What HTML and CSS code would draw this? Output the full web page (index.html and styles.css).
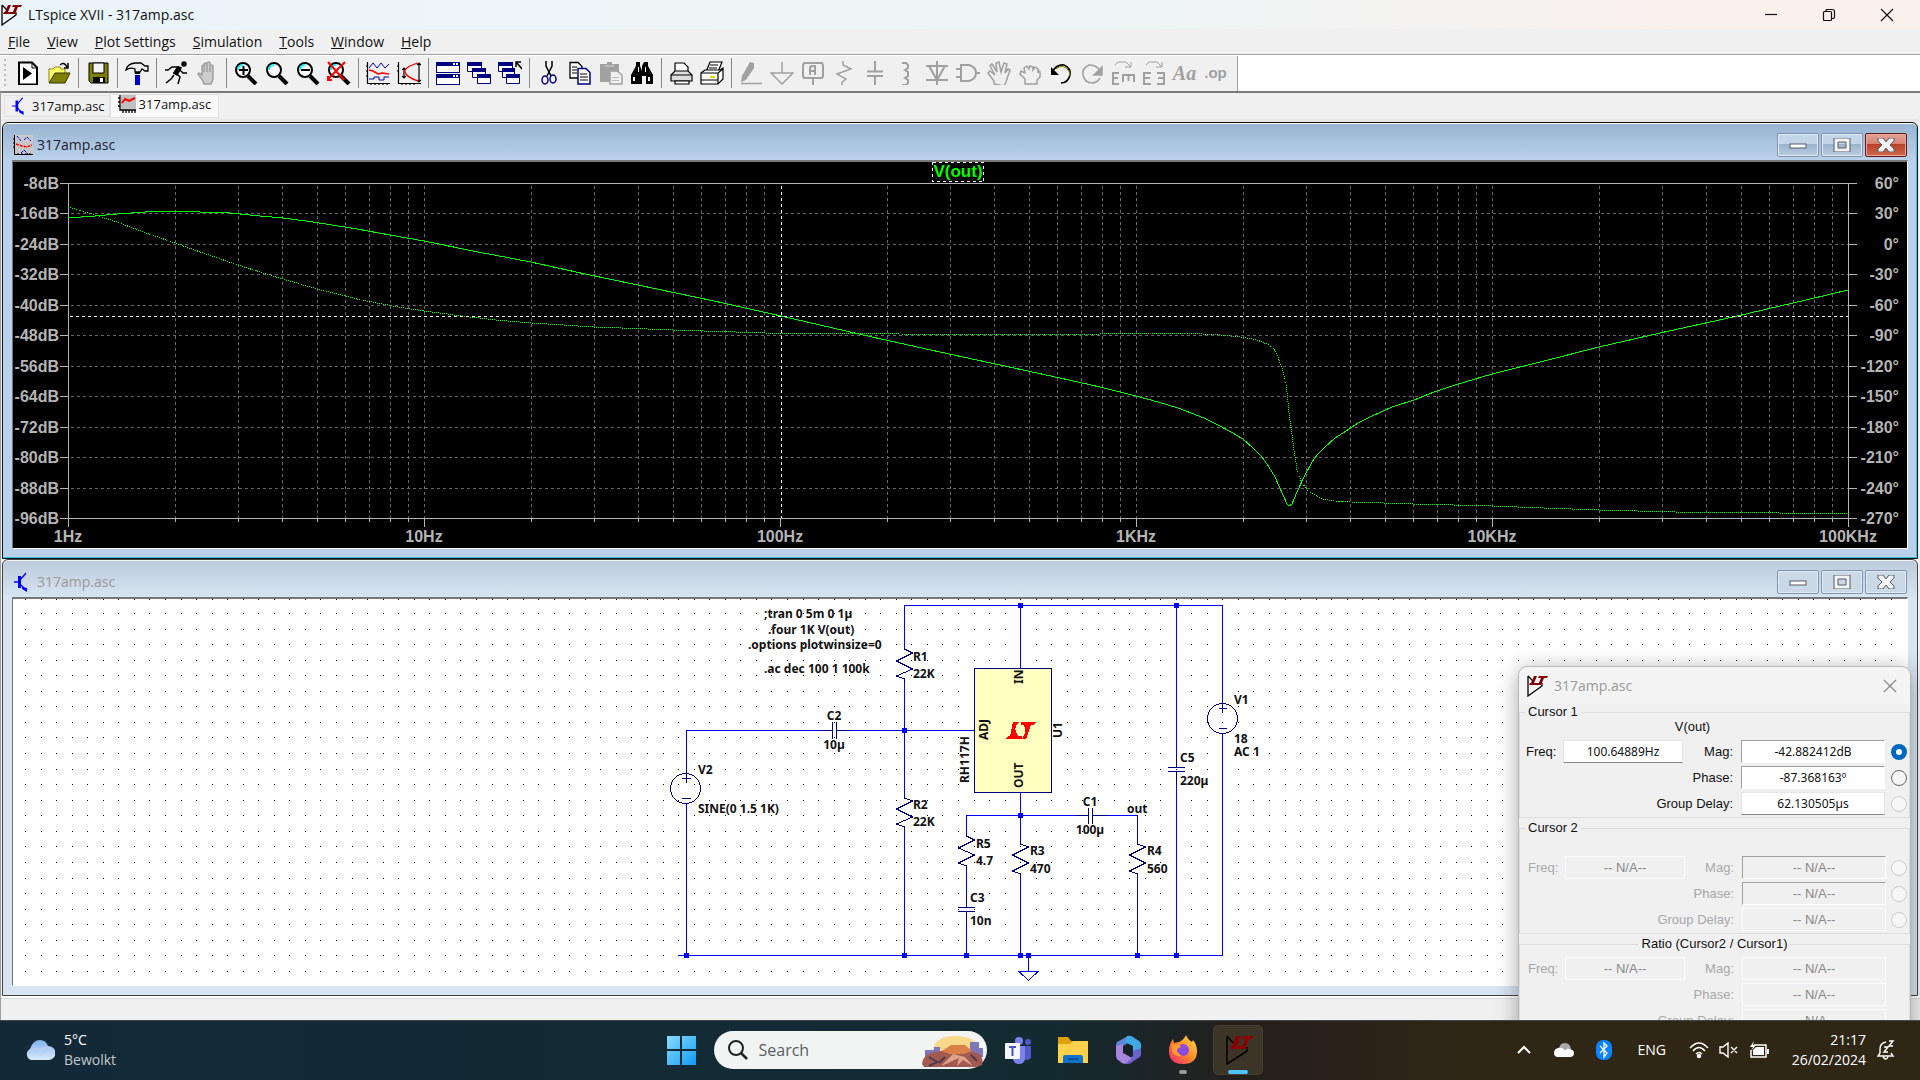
FILE: index.html
```html
<!DOCTYPE html>
<html lang="en">
<head>
<meta charset="utf-8">
<title>LTspice XVII - 317amp.asc</title>
<link rel="stylesheet" href="styles.css">
</head>
<body>
<svg class="defs" aria-hidden="true">
  <defs>
    <symbol id="lt" viewBox="0 0 22 22">
      <path d="M1 1V21L15 11V8M1 1L6 6" fill="none" stroke="#000" stroke-width="1.3"/>
      <path d="M7 1h3L7 8h5l-1 2H2l1-2h1zM12 1h9l-1 2h-3l-3 7h-3l3-7h-3z" fill="#800000"/>
    </symbol>
    <symbol id="bjt" viewBox="0 0 20 20">
      <path d="M1 10H6M7 8L13 1M7 12L13 18" fill="none" stroke="#00f" stroke-width="1.3"/>
      <path d="M5 4h3v12H5zM9 15l5 1v4l-5-3z" fill="#00f"/>
    </symbol>
    <symbol id="lens" viewBox="0 0 24 24">
      <circle cx="9" cy="9" r="7" fill="#fff" stroke="#000" stroke-width="2"/>
      <path d="M4 9a5 5 0 0 1 5-5" fill="none" stroke="#0ff" stroke-width="2"/>
      <path d="M14 15l8 8" stroke="#000" stroke-width="4"/>
    </symbol>
    <symbol id="min" viewBox="0 0 18 14"><rect x="1" y="6" width="16" height="4" fill="#fff" stroke="#555b66"/></symbol>
    <symbol id="max" viewBox="0 0 18 14"><path d="M1 0h16v14H1zM5 4v6h8V4z" fill="#f4f4f4" fill-rule="evenodd" stroke="#555b66"/></symbol>
    <symbol id="cross" viewBox="0 0 18 14"><path d="M1 0h5l3 4 3-4h5v3l-4 4 4 4v3h-5l-3-4-3 4H1v-3l4-4-4-4z" fill="#f4f4f4" stroke="#555b66"/></symbol>
  </defs>
</svg>

<div class="app">
  <header class="caption">
    <svg class="ico22"><use href="#lt"/></svg>
    <h1>LTspice XVII - 317amp.asc</h1>
    <div class="caption-buttons">
      <button aria-label="Minimize"><svg viewBox="0 0 14 14"><path d="M1 6.500h12" /></svg></button>
      <button aria-label="Restore"><svg viewBox="0 0 14 14"><path d="M1.500 4.500q0-1 1-1h6q1 0 1 1v7q0 1-1 1h-6q-1 0-1-1zM4 3V2.500q0-1 1-1h5.500q2 0 2 2V9q0 1-1 1.500H10"/></svg></button>
      <button aria-label="Close"><svg viewBox="0 0 14 14"><path d="M1 1l12 12M13 1L1 13"/></svg></button>
    </div>
  </header>

  <nav class="menu">
    <a href="#"><u>F</u>ile</a><a href="#"><u>V</u>iew</a><a href="#"><u>P</u>lot Settings</a><a href="#"><u>S</u>imulation</a><a href="#"><u>T</u>ools</a><a href="#"><u>W</u>indow</a><a href="#"><u>H</u>elp</a>
  </nav>

  <div class="rebar">
    <div class="toolbar">
      <button aria-label="Run"><svg viewBox="0 0 24 24"><path d="M3 1.500h13l5 5v17H3z" fill="#fff" stroke="#000" stroke-width="2"/><path d="M16 2v5h5" fill="none" stroke="#000"/><path d="M7 6v13l9-6.500z"/></svg></button>
      <button aria-label="Open"><svg viewBox="0 0 24 24"><path d="M2 21V8h4l2-2h5l1 2h4v4" fill="#ff6" stroke="#880"/><path d="M2 22l6-10h15l-5 10z" fill="#808000" stroke="#330"/><path d="M13 4q4-4 7 2M21 2v5h-4" fill="none" stroke="#000" stroke-width="1.500"/></svg></button>
      <span class="sep"></span>
      <button aria-label="Save"><svg viewBox="0 0 24 24"><path d="M3 2h19v20H5l-2-2z" fill="#808000" stroke="#000"/><path d="M7 2h11v10H7z" fill="#f4f4f4" stroke="#000"/><path d="M7 16h12v6H7z"/><path d="M14 17h3v4h-3z" fill="#fff"/></svg></button>
      <span class="sep"></span>
      <button aria-label="Control panel"><svg viewBox="0 0 24 24"><path d="M1 9q1-6 9-7h6l4 3h3v5h-3l-3-2-2 3h-5V8Q5 6 1 9z" fill="#eee" stroke="#000" stroke-width="1.300"/><path d="M10 11h5v2h-5z"/><path d="M10 14h5v10h-5z" fill="#0000d0"/></svg></button>
      <span class="sep"></span>
      <button aria-label="Simulate"><svg viewBox="0 0 24 24" fill="none" stroke="#000" stroke-width="1.500"><circle cx="20" cy="3" r="2" fill="#000"/><path d="M17 6l-5 7-2-1 4-6H8L4 9H1M16 9l3 3h4M12 12l4 4-2 7M10 14l-3 4-5 4"/><path d="M14 6l3 1-4 7-3-2z" fill="#000"/></svg></button>
      <button aria-label="Halt" disabled><svg viewBox="0 0 24 24"><path d="M8 20L3 13q1-2 4 1V5q2-2 2 0v6V3q2-2 3 0v8V2q2-2 3 0v9V5q2-2 3 0v13l-2 5H9z" fill="#ccc" stroke="#a0a0a0" stroke-width="1.500"/></svg></button>
      <span class="sep"></span>
      <button aria-label="Zoom in"><svg viewBox="0 0 24 24"><use href="#lens"/><path d="M5 9h9M9.500 5v9" stroke="#000" stroke-width="2"/></svg></button>
      <button aria-label="Pan"><svg viewBox="0 0 24 24"><use href="#lens"/></svg></button>
      <button aria-label="Zoom out"><svg viewBox="0 0 24 24"><use href="#lens"/><path d="M5 9h9" stroke="#000" stroke-width="2"/></svg></button>
      <button aria-label="Zoom full"><svg viewBox="0 0 24 24"><use href="#lens"/><path d="M1 1l16 18M18 1L1 18M1 15v4h4" fill="none" stroke="#f00" stroke-width="2"/></svg></button>
      <span class="sep"></span>
      <button aria-label="Autorange"><svg viewBox="0 0 24 24" fill="none"><path d="M1.500 1v21.500H24M5 22v2M9 22v2M13 22v2M17 22v2M21 22v2M0 5h2M0 10h2M0 15h2" stroke="#000" stroke-width="1.200"/><path d="M3 7l4-5 4 5 4-5 4 5 4-4" stroke="#0000c0"/><path d="M3 9l4 1 5 3 4-1 7 1" stroke="#f00" stroke-width="1.500"/><path d="M3 18h5v-2h5v3h5v-3h5" stroke="#0000a0"/></svg></button>
      <button aria-label="Toggle scale"><svg viewBox="0 0 24 24" fill="none"><path d="M1.500 1v21.500H24M5 22v2M9 22v2M13 22v2M17 22v2M0 5h2M0 10h2M22 2v19M7 7v10M5 9l2-2 2 2M5 15l2 2 2-2M20 4l2-2 2 2M20 19l2 2 2-2" stroke="#000" stroke-width="1.200"/><path d="M21 2Q7 6 8 11T21 20" stroke="#f00" stroke-width="1.300"/></svg></button>
      <span class="sep"></span>
      <button aria-label="Tile"><svg viewBox="0 0 24 24"><path d="M0 1h24v11H0zM0 13h24v11H0z" fill="#000080"/><path d="M1 5h22v6H1zM1 17h22v6H1z" fill="#fff"/><path d="M17 2h2v2h-2zM20 2h2v2h-2zM17 14h2v2h-2zM20 14h2v2h-2z" fill="#fff"/></svg></button>
      <button aria-label="Cascade"><svg viewBox="0 0 24 24"><g fill="#fff" stroke="#000080"><path d="M.5 1.500h14v9H.5zM5.500 7.500h13v9h-13zM10.500 13.500h13v9h-13z"/></g><path d="M0 1h15v4H0zM5 7h14v4H5zM10 13h14v4H10z" fill="#000080"/></svg></button>
      <button aria-label="Close all"><svg viewBox="0 0 24 24"><g fill="#fff" stroke="#000080"><path d="M.5 1.500h14v9H.5zM4.500 7.500h12v9h-12zM8.500 13.500h13v9h-13z"/></g><path d="M0 1h15v4H0zM4 7h13v4H4zM8 13h14v4H8z" fill="#000080"/><path d="M24 8l-5-6M18 6V1h5" fill="none" stroke="#000" stroke-width="1.500"/></svg></button>
      <span class="sep"></span>
      <button aria-label="Cut"><svg viewBox="0 0 24 24" fill="none"><path d="M9 0v5l5 10M15 0v5l-5 10" stroke="#000" stroke-width="1.500"/><ellipse cx="8" cy="19" rx="3" ry="4" stroke="#000080" stroke-width="1.500"/><ellipse cx="16" cy="18" rx="3" ry="4" stroke="#000080" stroke-width="1.500"/></svg></button>
      <button aria-label="Copy"><svg viewBox="0 0 24 24" fill="#fff"><path d="M2 1.500h8l4 4V17H2z" stroke="#000" stroke-width="1.300"/><path d="M10 7.500h8l4 4V23H10z" stroke="#000080" stroke-width="1.500"/><path d="M4 6h5M4 9h5M4 12h5M12 13h7M12 16h8M12 19h8" stroke="#000"/></svg></button>
      <button aria-label="Paste" disabled><svg viewBox="0 0 24 24"><path d="M1 3h7V1h5v2h7v18H1z" fill="#a0a0a0"/><path d="M11 10h7l5 4v9H11z" fill="#f0f0f0" stroke="#a0a0a0" stroke-width="1.500"/><path d="M6 4h9v2H6zM13 16h7v1h-7zM13 19h7v1h-7z" fill="#bbb"/></svg></button>
      <button aria-label="Find"><svg viewBox="0 0 24 24"><path d="M6 1h4v4l2 5V5l2-4h4v4l5 9v9h-7v-8h-4v8H1v-9l5-9z"/><path d="M3 16h2v4H3zM18 16h2v4h-2zM8 6h1v5H8zM15 6h1v5h-1z" fill="#fff"/></svg></button>
      <span class="sep"></span>
      <button aria-label="Print"><svg viewBox="0 0 24 24" stroke="#000" stroke-width="1.200"><path d="M6 11V2h9l4 4v5" fill="#fff"/><path d="M2 14l4-4h13l4 4v6H2z" fill="#ddd"/><path d="M2 14h21M6 20h14v3H6z" fill="#fff"/></svg></button>
      <button aria-label="Print setup"><svg viewBox="0 0 24 24" stroke="#000" stroke-width="1.200"><path d="M6 11l4-10h12l-4 10" fill="#fff"/><path d="M1 12l4-3h15l3-2v11l-5 5H1z" fill="#fff"/><path d="M1 12h17l5-4M18 12v11M1 19h17" fill="none"/><path d="M10 4h8M9 7h8" /><path d="M10 16h5" stroke="#dd0" stroke-width="2"/></svg></button>
      <span class="sep"></span>
      <button aria-label="Wire" disabled><svg viewBox="0 0 24 24"><path d="M11 1l4 1v5L7 19l-5 2 1-6z" fill="#a0a0a0"/><path d="M2 22.500h21" stroke="#a0a0a0" stroke-width="1.500"/></svg></button>
      <button aria-label="Ground" disabled><svg viewBox="0 0 24 24" class="line"><path d="M12 1v11M1 12h22L12 23z"/></svg></button>
      <button aria-label="Label net" disabled><svg viewBox="0 0 24 24" class="line"><path d="M3 2h18l1 2v11l-1 2H3l-1-2V4zM12 17v7M9 14V6l2-1h3v9M9 10h5" stroke-width="2"/></svg></button>
      <button aria-label="Resistor" disabled><svg viewBox="0 0 24 24" class="line"><path d="M11 0v4l8 4L5 13l9 5-4 3v3"/></svg></button>
      <button aria-label="Capacitor" disabled><svg viewBox="0 0 24 24" class="line"><path d="M12 0v10M12 15v9M4 10.500h16M4 15h16" stroke-width="2"/></svg></button>
      <button aria-label="Inductor" disabled><svg viewBox="0 0 24 24" class="line"><path d="M8 2h4l2 2v3l-3 2 3 2v4l-3 2 3 2v3l-2 2H8" stroke-width="2"/></svg></button>
      <button aria-label="Diode" disabled><svg viewBox="0 0 24 24" class="line"><path d="M12 0v24M1 5h22M1 19h22M4 5l8 14 8-14" stroke-width="2"/></svg></button>
      <button aria-label="Component" disabled><svg viewBox="0 0 24 24" class="line"><path d="M5 4h8q7 2 7 8t-7 8H5zM0 8h5M0 16h5M20 12h4" stroke-width="2"/></svg></button>
      <button aria-label="Move" disabled><svg viewBox="0 0 24 24" class="line"><path d="M7 23v-3L1 12l2-2 5 4L3 5l2-2 5 8L9 2l3-1 2 10 3-9 3 1-2 9 3-4 2 1-4 12-2 4z"/></svg></button>
      <button aria-label="Drag" disabled><svg viewBox="0 0 24 24" class="line"><path d="M7 23v-5l-5-5 1-3 4 2-1-5 3-2 2 3 1-3 3 1v3l2-3 3 2v4l1-2 1 1v5l-3 3v4z"/></svg></button>
      <button aria-label="Undo"><svg viewBox="0 0 24 24" fill="none"><path d="M3 11q5-8 12-7 7 3 6 10-2 8-9 8" stroke="#000" stroke-width="1.600"/><path d="M7 8q7-6 13 2l1 5" stroke="#880"/><path d="M2 6v8h8z" fill="#000"/></svg></button>
      <button aria-label="Redo" disabled><svg viewBox="0 0 24 24" class="line"><path d="M21 11Q16 3 9 4q-7 3-6 10 2 8 9 8 5 0 8-5"/><path d="M22 6v8h-8z" fill="#a0a0a0"/></svg></button>
      <button aria-label="Rotate" disabled><svg viewBox="0 0 24 24" class="line"><path d="M4 4l3-3h8l5 5M20 1v5h-6" stroke-width="1"/><path d="M8 12H2v11h6M2 17h5M12 21v-7h11v7M17.500 14v6" stroke-width="2"/></svg></button>
      <button aria-label="Mirror" disabled><svg viewBox="0 0 24 24" class="line"><path d="M4 4l3-3h8l5 5M20 1v5h-6" stroke-width="1"/><path d="M9 12H2v11h7M2 17h6M15 12h7v11h-7M22 17h-6" stroke-width="2"/></svg></button>
      <button class="glyph" aria-label="Text" disabled>Aa</button>
      <button class="glyph op" aria-label="SPICE directive" disabled>.op</button>
    </div>
  </div>

  <main class="workspace">
    <div class="tabs">
      <button class="tab"><svg class="ico18"><use href="#bjt"/></svg>317amp.asc</button>
      <button class="tab active"><svg class="ico18" viewBox="0 0 18 18"><path d="M3 0h15v14H3z" fill="#c0c0c0"/><path d="M2 0v15h16M5 15v3M8 15v3M11 15v3M14 15v3M17 15v3M0 3h2M0 7h2M0 11h2" fill="none" stroke="#000" stroke-width="1.300"/><path d="M4 8l3-4 4 2 6-3" fill="none" stroke="#f00" stroke-width="2"/></svg>317amp.asc</button>
    </div>

    <section class="child active">
      <header>
        <svg class="ico20" viewBox="0 0 20 20"><path d="M2 0h18v20H2z" fill="#c8c8c8"/><path d="M1.500 0v19.500H20M0 4h2M0 8h2M0 12h2M5 18v2M9 18v2M13 18v2M17 18v2" stroke="#000" fill="none"/><path d="M4 1l4 5M11 5l3-3 4 4M8 18l3-3 4 4" stroke="#00f" fill="none" stroke-dasharray="3 1"/><path d="M3 9l6 2 5 1 5-2" stroke="#f00" stroke-width="1.500" fill="none" stroke-dasharray="3 1"/></svg>
        <h2>317amp.asc</h2>
        <div class="child-buttons">
          <button aria-label="Minimize"><svg><use href="#min"/></svg></button>
          <button aria-label="Maximize"><svg><use href="#max"/></svg></button>
          <button class="close" aria-label="Close"><svg><use href="#cross"/></svg></button>
        </div>
      </header>
      <svg class="pane plot" viewBox="13 162 1894 386" role="img" aria-label="Bode plot of V(out)">
        <g class="gridlines">
          <path d="M71 213.500H1848M71 244.500H1848M71 274.500H1848M71 305.500H1848M71 335.500H1848M71 366.500H1848M71 396.500H1848M71 427.500H1848M71 457.500H1848M71 488.500H1848"/>
          <path d="M175.500 186V518M238.500 186V518M282.500 186V518M317.500 186V518M345.500 186V518M369.500 186V518M390.500 186V518M408.500 186V518M424.500 186V518"/>
          <path d="M531.500 186V518M594.500 186V518M638.500 186V518M673.500 186V518M701.500 186V518M725.500 186V518M746.500 186V518M764.500 186V518"/>
          <path d="M887.500 186V518M950.500 186V518M994.500 186V518M1029.500 186V518M1057.500 186V518M1081.500 186V518M1102.500 186V518M1120.500 186V518M1136.500 186V518"/>
          <path d="M1243.500 186V518M1306.500 186V518M1350.500 186V518M1385.500 186V518M1413.500 186V518M1437.500 186V518M1458.500 186V518M1476.500 186V518M1492.500 186V518"/>
          <path d="M1599.500 186V518M1662.500 186V518M1706.500 186V518M1741.500 186V518M1769.500 186V518M1793.500 186V518M1814.500 186V518M1832.500 186V518"/>
        </g>
        <g class="axes">
          <path d="M60 183.500H1857M60 518.500H1857M68.500 183V527M1848.500 183V527M424.500 518V527M780.500 518V527M1136.500 518V527M1492.500 518V527"/>
          <path d="M60 213.500h8M60 244.500h8M60 274.500h8M60 305.500h8M60 335.500h8M60 366.500h8M60 396.500h8M60 427.500h8M60 457.500h8M60 488.500h8M1848 213.500h9M1848 244.500h9M1848 274.500h9M1848 305.500h9M1848 335.500h9M1848 366.500h9M1848 396.500h9M1848 427.500h9M1848 457.500h9M1848 488.500h9"/>
          <path d="M175.500 518v4M238.500 518v4M282.500 518v4M317.500 518v4M345.500 518v4M369.500 518v4M390.500 518v4M408.500 518v4M531.500 518v4M594.500 518v4M638.500 518v4M673.500 518v4M701.500 518v4M725.500 518v4M746.500 518v4M764.500 518v4M887.500 518v4M950.500 518v4M994.500 518v4M1029.500 518v4M1057.500 518v4M1081.500 518v4M1102.500 518v4M1120.500 518v4M1243.500 518v4M1306.500 518v4M1350.500 518v4M1385.500 518v4M1413.500 518v4M1437.500 518v4M1458.500 518v4M1476.500 518v4M1599.500 518v4M1662.500 518v4M1706.500 518v4M1741.500 518v4M1769.500 518v4M1793.500 518v4M1814.500 518v4M1832.500 518v4"/>
        </g>
        <polyline class="trace" points="68,218 95,216 117,214 145,212 175,211 200,212 219,212 240,214 260,216 283,218 306,221 332,225 357,229 390,235 424,241 478,252 531,262 585,274 638,285 714,301 781,316 872,337 940,352 1000,365 1060,378 1100,387 1136,396 1158,402 1178,408 1204,418 1218,425 1231,432 1243,439 1253,448 1262,457 1269,467 1275,477 1283,495 1287,504 1289,506 1292,504 1297,492 1304,477 1312,462 1318,454 1325,447 1335,438 1346,431 1358,423 1372,416 1392,407 1414,400 1434,392 1455,385 1492,374 1544,361 1599,347 1660,333 1733,317 1780,306 1806,300 1848,290"/>
        <polyline class="trace dotted" points="68,207 92,214 117,222 146,233 175,243 206,254 238,265 260,272 283,279 300,284 317,289 337,294 357,299 377,303 398,307 424,311 462,316 495,320 531,323 594,327 673,330 765,333 800,333 900,334 1100,334 1150,333 1186,333 1220,335 1241,337 1257,340 1267,344 1272,347 1276,352 1282,368 1286,384 1289,412 1293,443 1297,470 1302,483 1309,492 1322,499 1335,501 1351,502 1414,504 1492,506 1544,508 1599,510 1675,512 1780,513 1848,514"/>
        <path class="cursor" d="M70 316.500H1848"/>
        <path class="cursor" d="M781.500 186V518"/>
        <rect class="focus" x="932.500" y="162.500" width="51" height="19"/>
        <text class="signal" x="958" y="177" text-anchor="middle">V(out)</text>
        <g class="scale" text-anchor="end">
          <text x="59" y="189">-8dB</text><text x="59" y="219">-16dB</text><text x="59" y="250">-24dB</text><text x="59" y="280">-32dB</text><text x="59" y="311">-40dB</text><text x="59" y="341">-48dB</text><text x="59" y="372">-56dB</text><text x="59" y="402">-64dB</text><text x="59" y="433">-72dB</text><text x="59" y="463">-80dB</text><text x="59" y="494">-88dB</text><text x="59" y="524">-96dB</text>
          <text x="1899" y="189">60°</text><text x="1899" y="219">30°</text><text x="1899" y="250">0°</text><text x="1899" y="280">-30°</text><text x="1899" y="311">-60°</text><text x="1899" y="341">-90°</text><text x="1899" y="372">-120°</text><text x="1899" y="402">-150°</text><text x="1899" y="433">-180°</text><text x="1899" y="463">-210°</text><text x="1899" y="494">-240°</text><text x="1899" y="524">-270°</text>
        </g>
        <g class="scale" text-anchor="middle">
          <text x="68" y="542">1Hz</text><text x="424" y="542">10Hz</text><text x="780" y="542">100Hz</text><text x="1136" y="542">1KHz</text><text x="1492" y="542">10KHz</text><text x="1848" y="542">100KHz</text>
        </g>
      </svg>
    </section>

    <section class="child">
      <header>
        <svg class="ico20"><use href="#bjt"/></svg>
        <h2>317amp.asc</h2>
        <div class="child-buttons">
          <button aria-label="Minimize"><svg><use href="#min"/></svg></button>
          <button aria-label="Maximize"><svg><use href="#max"/></svg></button>
          <button aria-label="Close"><svg><use href="#cross"/></svg></button>
        </div>
      </header>
      <svg class="pane schematic" viewBox="13 599 1894 386" role="img" aria-label="Amplifier schematic">
        <path class="dots" d="M25 599.500H1900M25 613.500H1900M25 629.500H1900M25 644.500H1900M25 660.500H1900M25 675.500H1900M25 691.500H1900M25 706.500H1900M25 722.500H1900M25 737.500H1900M25 753.500H1900M25 769.500H1900M25 784.500H1900M25 800.500H1900M25 815.500H1900M25 831.500H1900M25 846.500H1900M25 862.500H1900M25 878.500H1900M25 893.500H1900M25 909.500H1900M25 924.500H1900M25 940.500H1900M25 955.500H1900M25 971.500H1900"/>
        <rect class="chip" x="974.500" y="668.500" width="77" height="124"/>
        <g class="wires">
          <path d="M904.500 648V605.500H1222.500V703M1222.500 733V955.500H678M904.500 679V797M904.500 827V955M686.500 773V730.500H819M849 730.500H974M686.500 803V955M1020.500 605V668M1020.500 792V843M1020.500 874V955M966.500 835V815.500H1076M1106 815.500H1137.500V843M1137.500 874V955M966.500 866V896M966.500 922V955M1176.500 605V756M1176.500 783V955M1028.500 955V971M1019 971.500H1038L1028.500 980.500z"/>
        </g>
        <g class="parts">
          <path d="M904.500 648v1l8 4-16 8 16 8-16 7 8 3v3M904.500 797v1l8 3-16 8 16 8-16 7 8 3v3M966.500 835v1l8 4-16 8 16 7-16 8 8 3v3M1020.500 843v1l8 3-16 8 16 8-16 8 8 3v3M1137.500 843v1l8 3-16 8 16 8-16 8 8 3v3"/>
          <path d="M819 730.500h13.500M832.500 722v17M836.500 722v17M836.500 730.500h13M1076 815.500h12.500M1088.500 808v16M1092.500 808v16M1092.500 815.500h14M966.500 896v11.500M958 907.500h17M958 911.500h17M966.500 911.500v11M1176.500 756v11.500M1168 767.500h17M1168 771.500h17M1176.500 771.500v12"/>
          <circle cx="685.500" cy="788.500" r="15"/><circle cx="1222.500" cy="718.500" r="15"/>
          <path d="M686.500 770v13M682 778.500h9M682 798.500h9M1222.500 700v13M1219 708.500h8M1219 728.500h8"/>
        </g>
        <path class="nodes" d="M1018 603h5v5h-5zM1174 603h5v5h-5zM902 728h5v5h-5zM1018 813h5v5h-5zM684 953h5v5h-5zM902 953h5v5h-5zM964 953h5v5h-5zM1018 953h5v5h-5zM1026 953h5v5h-5zM1135 953h5v5h-5zM1174 953h5v5h-5z"/>
        <path class="brand" d="M1013 722h6q-7 6-1 14h4v3h-16l2-3h2zM1021 722h15l-2 3h-3l-5 14h-4q5-7 2-14h-3z"/>
        <g class="notes">
          <text x="764" y="618">;tran 0 5m 0 1µ</text><text x="768" y="634">.four 1K V(out)</text><text x="748" y="649">.options plotwinsize=0</text><text x="764" y="673">.ac dec 100 1 100k</text>
          <text x="913" y="661">R1</text><text x="913" y="678">22K</text><text x="913" y="809">R2</text><text x="913" y="826">22K</text>
          <text x="698" y="774">V2</text><text x="698" y="813">SINE(0 1.5 1K)</text>
          <text x="976" y="848">R5</text><text x="976" y="865">4.7</text><text x="1030" y="855">R3</text><text x="1030" y="873">470</text>
          <text x="970" y="902">C3</text><text x="970" y="925">10n</text><text x="1127" y="813">out</text>
          <text x="1147" y="855">R4</text><text x="1147" y="873">560</text><text x="1180" y="762">C5</text><text x="1180" y="785">220µ</text>
          <text x="1234" y="704">V1</text><text x="1234" y="743">18</text><text x="1234" y="756">AC 1</text>
          <g text-anchor="middle"><text x="834" y="720">C2</text><text x="834" y="749">10µ</text><text x="1090" y="806">C1</text><text x="1090" y="834">100µ</text></g>
          <text transform="translate(1023 684) rotate(-90)">IN</text><text transform="translate(988 740) rotate(-90)">ADJ</text><text transform="translate(1023 788) rotate(-90)">OUT</text><text transform="translate(969 783) rotate(-90)">RH117H</text><text transform="translate(1062 738) rotate(-90)">U1</text>
        </g>
      </svg>
    </section>

    <aside class="dialog">
      <header>
        <svg class="ico22"><use href="#lt"/></svg>
        <h2>317amp.asc</h2>
        <button aria-label="Close"><svg viewBox="0 0 14 14"><path d="M1 1l12 12M13 1L1 13"/></svg></button>
      </header>
      <fieldset>
        <legend>Cursor 1</legend>
        <p class="trace-name">V(out)</p>
        <div class="fields">
          <label for="f1">Freq:</label><input id="f1" value="100.64889Hz">
          <label for="m1">Mag:</label><input id="m1" class="sunken" value="-42.882412dB"><input type="radio" name="c1" aria-label="Magnitude" checked>
          <label class="wide" for="p1">Phase:</label><input id="p1" class="sunken" value="-87.368163º"><input type="radio" name="c1" aria-label="Phase">
          <label class="wide" for="g1">Group Delay:</label><input id="g1" value="62.130505µs"><input type="radio" name="c1" aria-label="Group delay" disabled>
        </div>
      </fieldset>
      <fieldset class="off">
        <legend>Cursor 2</legend>
        <p class="trace-name"></p>
        <div class="fields">
          <label for="f2">Freq:</label><input id="f2" value="-- N/A--" disabled>
          <label for="m2">Mag:</label><input id="m2" class="sunken" value="-- N/A--" disabled><input type="radio" name="c2" aria-label="Magnitude" disabled>
          <label class="wide" for="p2">Phase:</label><input id="p2" class="sunken" value="-- N/A--" disabled><input type="radio" name="c2" aria-label="Phase" disabled>
          <label class="wide" for="g2">Group Delay:</label><input id="g2" value="-- N/A--" disabled><input type="radio" name="c2" aria-label="Group delay" disabled>
        </div>
      </fieldset>
      <fieldset class="off ratio">
        <legend>Ratio (Cursor2 / Cursor1)</legend>
        <div class="fields">
          <label for="f3">Freq:</label><input id="f3" value="-- N/A--" disabled>
          <label for="m3">Mag:</label><input id="m3" value="-- N/A--" disabled><span></span>
          <label class="wide" for="p3">Phase:</label><input id="p3" value="-- N/A--" disabled><span></span>
          <label class="wide" for="g3">Group Delay:</label><input id="g3" value="-- N/A--" disabled><span></span>
        </div>
      </fieldset>
    </aside>
    <footer class="status"></footer>
  </main>
</div>

<footer class="taskbar">
  <button class="weather">
    <svg viewBox="0 0 30 20"><defs><linearGradient id="cl" x2="0" y2="1"><stop stop-color="#7fb0ee"/><stop offset="1" stop-color="#dbe9fb"/></linearGradient></defs><path d="M6 20a6 6 0 0 1-1-11Q8 0 15 0q6 0 8 6a7 7 0 0 1 1 14z" fill="url(#cl)"/><path d="M6 10q6-3 9 1 4-5 10-3" fill="none" stroke="#b8d2f5" stroke-width="2"/></svg>
    <span class="lines"><span>5°C</span><span class="dim">Bewolkt</span></span>
  </button>
  <div class="dock">
    <button class="task" aria-label="Start"><svg viewBox="0 0 30 30"><defs><linearGradient id="wn" x2="1" y2="1"><stop stop-color="#8bdcff"/><stop offset="1" stop-color="#0f9bf5"/></linearGradient></defs><path d="M1 1h13v13H1zM16 1h14v13H16zM1 16h13v14H1zM16 16h14v14H16z" fill="url(#wn)"/></svg></button>
    <label class="search">
      <svg class="glass" viewBox="0 0 20 20"><circle cx="8" cy="8" r="7" fill="none" stroke="#222" stroke-width="2"/><path d="M13 13l6 6" stroke="#222" stroke-width="2.500"/></svg>
      <input type="text" placeholder="Search" aria-label="Search">
      <svg class="mesa" viewBox="0 0 64 34"><path d="M12 20q0-17 22-17t24 14z" fill="#f8d98c"/><path d="M4 24v-7h9v-3h6v4h8v3h22V9h9v6h4v9z" fill="#7e78b8"/><path d="M2 27q2-6 12-8l12-2 6-4h12l5 5 9 3q5 4 3 11l-6 2H3q-3-3-1-7z" fill="#a25a50"/><path d="M21 18l9-6h14l7 6-8 3H28z" fill="#dc8049"/><path d="M20 33l12-12 12 3 8 9-10-6-6 6 2-8z" fill="#e0a18c"/><path d="M8 24l8 5-8 4M50 22l6 6M24 24l-6 6" fill="none" stroke="#4c394e" stroke-width="2"/></svg>
    </label>
    <button class="task" aria-label="Teams"><svg viewBox="0 0 30 30"><circle cx="16" cy="6" r="4" fill="#7b83eb"/><circle cx="25" cy="7" r="3" fill="#5059c9"/><path d="M20 11h8v12q-4 4-8 0z" fill="#5059c9"/><path d="M10 11h12v13q-1 5-6 5t-6-5z" fill="#7b83eb"/><rect x="2" y="8" width="15" height="16" rx="1" fill="#f4f5ff"/><path d="M6 12h7M9.500 12v9" stroke="#4b53bc" stroke-width="2"/></svg></button>
    <button class="task" aria-label="File Explorer"><svg viewBox="0 0 30 30"><path d="M0 2h10l3 4h17v22H0z" fill="#e0a00c"/><path d="M0 9h12l3-3h15v22H0z" fill="#ffd04a"/><path d="M5 28v-6q0-2 2-2h16q2 0 2 2v6z" fill="#1173c8"/><path d="M10 24h10" stroke="#075299" stroke-width="2"/></svg></button>
    <button class="task" aria-label="Microsoft 365"><svg viewBox="0 0 30 30"><path d="M15 1L4 7q-1 1-1 4v9l7-3v-6l10-6z" fill="#5b86d8"/><path d="M14 1q3-1 6 1l6 4q2 1 2 4v7l-8 2v-8l-8-4z" fill="#3ea9e4"/><path d="M28 13v6q0 3-3 4l-7 5q-3 2-7 0l9-7v-5z" fill="#6c62cd"/><path d="M3 11l7-2v9l9 5-7 6q-4-1-7-4-2-1-2-5z" fill="#a885dd"/><circle cx="15.500" cy="15" r="4" fill="#17212a"/></svg></button>
    <button class="task" aria-label="Firefox"><svg viewBox="0 0 30 30"><defs><linearGradient id="ff" x1="1" x2="0" y2="1"><stop stop-color="#ffe14a"/><stop offset=".5" stop-color="#ff8a26"/><stop offset="1" stop-color="#f0207a"/></linearGradient></defs><path d="M18 0q2 5 6 7l1-2q4 5 4 11 0 13-14 13T1 16Q1 9 5 4l1 4 5-1q5-2 7-7z" fill="url(#ff)"/><circle cx="15" cy="15" r="6" fill="#8b4be0"/><path d="M4 10q7-2 9 2-5 1-4 5l5 4q-9 1-10-6z" fill="#ff9d2a"/></svg><i class="dot"></i></button>
    <button class="task current" aria-label="LTspice"><svg viewBox="0 0 30 30"><path d="M4 1v28l20-13V12M4 1l8 9" fill="none" stroke="#000" stroke-width="1.500"/><path d="M13 1h5l-4 10h6l-1 3H7l1-3h1zM20 1h10l-1 3h-3l-4 10h-4l4-10h-3z" fill="#8b0000"/></svg><i class="bar"></i></button>
  </div>
  <div class="tray">
    <button class="slot chev" aria-label="Hidden icons"><svg viewBox="0 0 14 14"><path d="M1 10l6-6 6 6" fill="none" stroke="#fff" stroke-width="2"/></svg></button>
    <button class="slot" aria-label="OneDrive"><svg width="20" height="14" viewBox="0 0 20 14"><path d="M5 7q0-7 6-7 5 0 6 6z" fill="#aaa"/><path d="M0 10q0-4 4-5 4-1 7 2 2-2 5-1 4 1 4 4 0 4-4 4H4q-4 0-4-4z" fill="#fff"/></svg></button>
    <button class="slot" aria-label="Bluetooth"><svg width="16" height="20" viewBox="0 0 16 20"><rect width="16" height="20" rx="7" fill="#0a84ff"/><path d="M4 6l7 7-3 4V3l3 3-7 7" fill="none" stroke="#fff" stroke-width="1.300"/></svg></button>
    <button class="lang">ENG</button>
    <button class="quick" aria-label="Quick settings">
      <svg width="20" height="18" viewBox="0 0 20 18" fill="none" stroke="#fff" stroke-width="1.500"><path d="M1 7q9-10 18 0M4 10q6-7 12 0M7 13q3-3 6 0"/><circle cx="10" cy="15" r="1.500" fill="#fff"/></svg>
      <svg width="20" height="16" viewBox="0 0 20 16" fill="none" stroke="#fff" stroke-width="1.400"><path d="M1 5h3l5-4v14l-5-4H1zM12 5l6 6M18 5l-6 6"/></svg>
      <svg width="20" height="18" viewBox="0 0 20 18"><path d="M5 4h12v12H2V9" fill="none" stroke="#fff" stroke-width="1.500"/><path d="M7 6h8v8H4V9zM18 8h2v5h-2zM5 0L1 6h3L2 10l5-6H4z" fill="#fff"/></svg>
    </button>
    <button class="clock"><time class="lines"><span>21:17</span><span>26/02/2024</span></time>
      <svg width="18" height="20" viewBox="0 0 18 20" fill="none" stroke="#fff" stroke-width="1.400"><path d="M9 2Q3 3 3 9v4l-2 3h15l-2-3M6 17q3 4 5 0M12 1h4l-4 5h4M7 7h4l-4 5h4"/></svg></button>
  </div>
</footer>
</body>
</html>
```
FILE: styles.css
```css
* { box-sizing: border-box; }
body {
  margin: 0;
  min-height: 100vh;
  display: flex;
  flex-direction: column;
  background: #f0f0f0;
  color: #111;
  font: 14px/20px "Open Sans", "Noto Sans", sans-serif;
}
button { padding: 0; border: 0; background: none; color: inherit; font: inherit; }
svg { display: block; flex: none; }
h1, h2, p { margin: 0; font-size: inherit; font-weight: 400; }
.defs { position: absolute; width: 0; height: 0; }
.ico18 { width: 18px; height: 18px; }
.ico20 { width: 20px; height: 20px; }
.ico22 { width: 22px; height: 22px; }

.app { flex: 1; display: flex; flex-direction: column; }

.caption {
  display: flex;
  align-items: center;
  gap: 5px;
  height: 29px;
  padding: 0 4px 0 1px;
  background: linear-gradient(90deg, #e9f4f8, #eff5f5 60%, #f9f1ee 88%);
}
.caption-buttons { display: flex; margin-left: auto; }
.caption-buttons button { width: 58px; height: 28px; display: grid; place-items: center; }
.caption-buttons svg, .dialog header button svg { width: 14px; height: 14px; fill: none; stroke: #111; stroke-width: 1.2; }

.menu {
  display: flex;
  gap: 17px;
  height: 27px;
  padding: 3px 8px 0;
  border-bottom: 1px solid #fff;
  box-shadow: inset 0 -1px #a0a0a0;
}
.menu a { color: #111; text-decoration: none; }

.rebar { display: flex; background: #fff; }
.toolbar {
  display: flex;
  align-items: center;
  height: 35px;
  padding: 0 6px 2px 8px;
  background: #f0f0f0;
  border-right: 1px solid #a0a0a0;
}
.toolbar::before { content: ""; width: 2px; height: 28px; margin: 0 6px 0 -4px; background: repeating-linear-gradient(#bbb 0 2px, transparent 2px 5px); }
.toolbar button { width: 31px; height: 30px; display: grid; place-items: center; }
.toolbar svg { width: 24px; height: 24px; }
.toolbar .line { fill: none; stroke: #a0a0a0; stroke-width: 1.5; }
.sep { width: 8px; height: 30px; background: linear-gradient(#888, #888) center / 1px 100% no-repeat; }
.toolbar .glyph { color: #a0a0a0; font: italic bold 20px/24px "Liberation Serif", serif; }
.toolbar .op { font: bold 15px/24px "Liberation Sans", sans-serif; }

.workspace {
  flex: 1;
  display: flex;
  flex-direction: column;
  position: relative;
  overflow: hidden;
  padding: 0 2px 0 1px;
  border-top: 2px solid #7a7a7a;
  border-left: 1px solid #a0a0a0;
}
.tabs { display: flex; height: 29px; padding: 0 2px 0 2px; border-bottom: 3px solid #e8e8e8; }
.tab {
  display: flex;
  align-items: center;
  gap: 3px;
  height: 22px;
  margin-top: 2px;
  padding: 0 4px 0 6px;
  border: 1px solid #e0e0e0;
  font-size: 13px;
}
.tab.active { height: 24px; margin-top: 1px; padding: 0 7px 4px; background: #f9f9f9; }

.child {
  padding: 0 9px 9px;
  border: 1px solid #444;
  border-radius: 6px 6px 0 0;
  background: linear-gradient(#bccad9, #d7e4f2 37px);
  box-shadow: inset 0 1px #eef4fa;
}
.child.active {
  border-color: #111;
  background: linear-gradient(#99b4d1, #b9d1ea 37px);
  box-shadow: inset 0 1px #fff, inset -1px -1px #2cc4e0;
}
.child header { display: flex; align-items: center; gap: 4px; height: 37px; padding: 7px 1px 0; color: #999; }
.child.active header { color: #223; }
.child-buttons { display: flex; gap: 2px; margin-left: auto; }
.child-buttons button {
  display: grid;
  place-items: center;
  width: 42px;
  height: 24px;
  border: 1px solid #7f92b0;
  border-radius: 2px;
  background: #cbd8e6;
  box-shadow: inset 0 0 0 1px #e2eaf3;
}
.child-buttons svg { width: 18px; height: 14px; overflow: visible; }
.child.active .child-buttons button { background: linear-gradient(#c3d5e8 45%, #9bb3cd 45%, #b7cde3); }
.child.active .child-buttons .close {
  border-color: #5a1a1a;
  background: linear-gradient(#e3a598, #d9816f 45%, #b73e26 45%, #cc6a50);
  box-shadow: inset 0 0 0 1px #eba79a;
}
.pane {
  width: 100%;
  height: auto;
  box-sizing: border-box;
  border: 1px solid #fff;
  border-top: 2px solid #777;
  border-left-color: #777;
}

.plot { background: #000; fill: none; }
.plot path, .plot rect, .plot polyline, .schematic path, .schematic rect, .schematic circle { shape-rendering: crispEdges; }
.gridlines { stroke: #686868; stroke-dasharray: 3 3; }
.axes { stroke: #b4b4b4; }
.trace { stroke: #0f0; }
.dotted { stroke-dasharray: 1 1; }
.cursor, .focus { stroke: #fff; stroke-dasharray: 3 3; }
.scale { fill: #b4b4b4; font: bold 16px "Liberation Sans", Arial, sans-serif; }
.signal { fill: #0f0; font: bold 17px "Liberation Sans", Arial, sans-serif; }

.schematic { background: #fff; fill: none; }
.dots { stroke: #000; stroke-dasharray: 1 14.55; }
.chip { fill: #ffffc0; stroke: #000080; }
.wires { stroke: #00f; }
.parts { stroke: #000080; }
.nodes { fill: #00f; }
.brand { fill: #f00; }
.notes { fill: #111; font: bold 12px "Noto Sans", sans-serif; }

.dialog {
  position: absolute;
  top: 573px;
  right: 9px;
  width: 393px;
  border: 1px solid #b8b8b8;
  border-radius: 9px 9px 0 0;
  background: #f0f0f0;
  box-shadow: 0 4px 22px rgba(0, 0, 0, .35);
  font: 13px/16px "Liberation Sans", Arial, sans-serif;
}
.dialog header {
  display: flex;
  align-items: center;
  gap: 5px;
  height: 37px;
  padding: 0 13px 0 8px;
  border-radius: 9px 9px 0 0;
  background: #f4f4f4;
  color: #999;
  font: 14px/20px "Open Sans", sans-serif;
}
.dialog header button { margin-left: auto; }
.dialog header button svg { stroke: #888; }
fieldset { margin: 0 0 2px; padding: 0 0 2px; border: 1px solid #dcdcdc; min-width: 0; }
legend { margin-left: 5px; padding: 0 3px; }
.ratio legend { margin: 0 auto; }
.trace-name { height: 20px; padding-right: 44px; text-align: center; line-height: 14px; }
.fields {
  display: grid;
  grid-template-columns: 37px 120px 1fr 144px 24px;
  grid-auto-rows: 23px;
  row-gap: 3px;
  align-items: center;
  padding-left: 6px;
}
.fields label { padding-right: 8px; text-align: right; white-space: nowrap; }
.fields label:first-child { padding-right: 0; text-align: left; }
.fields .wide { grid-column: 1 / 4; }
.fields input:not([type="radio"]) {
  width: 100%;
  height: 23px;
  padding: 0 0 1px;
  border: 1px solid #e6e6e6;
  border-bottom-color: #868686;
  background: #fff;
  color: #111;
  font: 12px/16px "Noto Sans", sans-serif;
  text-align: center;
}
.fields input.sunken:not([type="radio"]) { border-color: #a0a0a0 #fff #fff #a0a0a0; }
.off label, .off input { color: #a8a8a8; }
.off .fields { padding-left: 8px; grid-template-columns: 37px 120px 1fr 144px 23px; }
.ratio .fields { padding-top: 5px; }
.fields input:not([type="radio"]):disabled { background: #f0f0f0; color: #888; border-color: #fafafa; font: 13px/16px "Liberation Sans", sans-serif; }
.fields input.sunken:not([type="radio"]):disabled { border-color: #a0a0a0 #fff #fff #a0a0a0; }
.fields input[type="radio"] {
  appearance: none;
  justify-self: end;
  width: 16px;
  height: 16px;
  margin: 0 2px 0 0;
  border: 1px solid #666;
  border-radius: 50%;
  background: #f6f6f6;
}
.fields input[type="radio"]:checked { border: 5px solid #0067c0; background: #fff; }
.fields input[type="radio"]:disabled { border-color: #ccc; }
.status { flex: 1; min-height: 24px; margin: 0 -2px 0 -2px; border-top: 2px solid #fff; box-shadow: inset 0 1px #dcdcdc; background: #f0f0f0; }

.taskbar {
  position: relative;
  display: grid;
  grid-template-columns: 1fr auto 1fr;
  align-items: center;
  height: 60px;
  padding-bottom: 2px;
  border-top: 1px solid #45484a;
  background: linear-gradient(90deg, #132938, #132b33 45%, #142a31 55%, #241f1c 65%, #2f2616 76%);
  color: #fff;
  font: 14px/20px "Open Sans", "Noto Sans", sans-serif;
}
.weather { display: flex; align-items: center; gap: 9px; padding-left: 25px; justify-self: start; }
.weather svg { width: 30px; height: 20px; }
.lines { display: flex; flex-direction: column; text-align: left; }
.dim { color: #c4c8cb; }
.dock { display: flex; align-items: center; gap: 5px; margin-right: 2px; }
.task { position: relative; display: grid; place-items: center; width: 50px; height: 50px; border-radius: 5px; }
.task svg { width: 30px; height: 30px; }
.task.current { background: #3c3426; border: 1px solid #474030; }
.dot, .bar { position: absolute; bottom: 1px; height: 4px; width: 8px; border-radius: 2px; background: #9a9a98; }
.bar { bottom: 0; width: 20px; background: #4cc2ff; }
.search {
  display: flex;
  align-items: center;
  width: 273px;
  height: 38px;
  margin: 0 1px 0 3px;
  padding: 0 2px 0 14px;
  border-radius: 19px;
  background: #f1f4f3;
}
.search input { flex: 1; min-width: 0; padding: 0 0 0 11px; border: 0; background: none; font: 16px/20px "Open Sans", sans-serif; }
.search input::placeholder { color: #5a5e60; opacity: 1; }
.glass { width: 20px; height: 20px; }
.mesa { width: 64px; height: 34px; }
.tray { display: flex; align-items: center; justify-self: end; padding-right: 25px; }
.tray button { display: flex; align-items: center; justify-content: center; }
.tray .slot { width: 40px; }
.chev svg { width: 14px; height: 14px; }
.tray .lang { width: 56px; }
.tray .quick { gap: 10px; margin: 0 23px 0 9px; }
.clock .lines { text-align: right; }
.tray .clock { gap: 11px; }
```
